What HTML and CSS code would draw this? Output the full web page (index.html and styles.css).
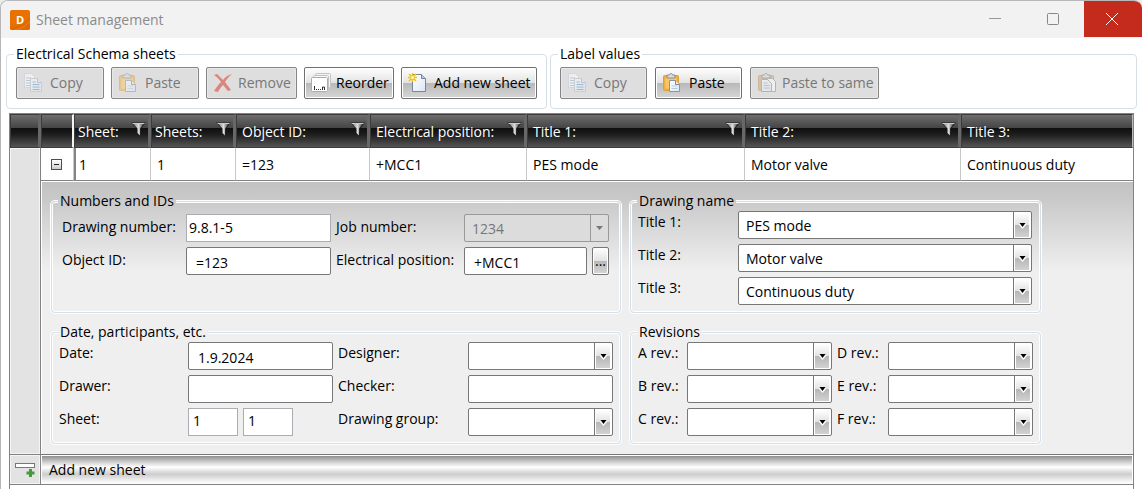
FILE: index.html
```html
<!DOCTYPE html>
<html lang="en">
<head>
<meta charset="utf-8">
<title>Sheet management</title>
<link rel="stylesheet" href="styles.css">
</head>
<body>
<svg width="0" height="0" class="defs" aria-hidden="true">
  <defs>
    <linearGradient id="funnelFill" x1="0" x2="1" y1="0" y2="0">
      <stop offset="0" stop-color="#777"/><stop offset=".5" stop-color="#ddd"/><stop offset="1" stop-color="#333"/>
    </linearGradient>
    <linearGradient id="pageFill" x1="0" x2="1" y1="0" y2="1">
      <stop offset="0" stop-color="#fff"/><stop offset="1" stop-color="#dbe6f4"/>
    </linearGradient>
    <symbol id="copy" viewBox="0 0 20 20">
      <path d="M1.500 .5h7l3 3v11h-10z" fill="#fff" stroke="#c8d0da"/>
      <path d="M3 5h5M3 7.500h6M3 10h6M3 12.500h4" stroke="#8fb4dc"/>
      <path d="M7.500 5.500h7l4 4v9h-11z" fill="url(#pageFill)" stroke="#b4bfcc"/>
      <path d="M14.500 5.500v4h4" fill="#e8eef6" stroke="#9aa9bb"/>
      <path d="M9.500 9h3M9.500 11.500h7M9.500 14h7M9.500 16.500h7" stroke="#5e96cf"/>
    </symbol>
    <symbol id="paste" viewBox="0 0 20 20">
      <rect x="1.500" y="2.500" width="15" height="15" rx="1" fill="#f0b040" stroke="#dba03a"/>
      <path d="M3.500 5h11v10.500h-11z" fill="#f8c766"/>
      <path d="M5 2h2.500c0-2 3-2 3 0H13v3H5z" fill="#d9dde2" stroke="#868c94"/>
      <path d="M7.500 7.500h6l4 4v7h-10z" fill="url(#pageFill)" stroke="#8995a4"/>
      <path d="M13.500 7.500v4h4" fill="#eef3f9" stroke="#7a8797"/>
      <path d="M9.500 13h5.500M9.500 15.500h6" stroke="#b9cbe0"/>
    </symbol>
    <symbol id="pasteSame" viewBox="0 0 20 20">
      <rect x="1.500" y="2.500" width="15" height="15" rx="1" fill="#d9a66a" stroke="#b98d5c"/>
      <path d="M5 2h2.500c0-2 3-2 3 0H13v3H5z" fill="#d9dde2" stroke="#70767e"/>
      <path d="M10.500 5.500h5l3 3v10h-8z" fill="#fff" stroke="#8b8b8b"/>
      <path d="M4.500 6.500h6l4 4v8h-10z" fill="url(#pageFill)" stroke="#8b8b8b"/>
      <path d="M6.500 10h4M6.500 12.500h6M6.500 15h6" stroke="#7fa9d8"/>
    </symbol>
    <symbol id="remove" viewBox="0 0 20 20">
      <path d="M1 2l3-1c2 2 4 4 6 6 2-3 5-5 9-6-3 2-5 5-7 8 2 3 4 5 6 8l-3 1c-2-2-3-4-5-6-2 2-4 5-5 7l-4-1c2-3 4-6 7-9-2-3-4-5-7-7z" fill="#d8301c"/>
    </symbol>
    <symbol id="reorder" viewBox="0 0 20 20">
      <rect x="4.500" y=".5" width="15" height="14" rx="1" fill="#f4f4f4" stroke="#c4c4c4"/>
      <rect x="2.500" y="2.500" width="15" height="14" rx="1" fill="#fafafa" stroke="#c0c0c0"/>
      <rect x=".5" y="4.500" width="16" height="14" rx="1" fill="#fff" stroke="#adadad"/>
      <path d="M3.500 13v4M11.500 17v-3h2v3M5 16.500h1M7 16.500h1M9 16.500h1" fill="none" stroke="#333"/>
    </symbol>
    <symbol id="new" viewBox="0 0 20 20">
      <path d="M4.500 1.500h9l4 4v13h-13z" fill="url(#pageFill)" stroke="#75879f"/>
      <path d="M13.500 1.500v4h4" fill="#bccbe0" stroke="#75879f"/>
      <path d="M4.500 0v9M0 4.500h9M1 1l7 7M8 1l-7 7" stroke="#f1c40f" stroke-width="1.500"/>
      <circle cx="4.500" cy="4.500" r="1.500" fill="#fff7c2"/>
    </symbol>
    <symbol id="funnel" viewBox="0 0 15 16">
      <path d="M0 .5h15l-5 6.500v8.500l-4-4V7z" fill="#222"/>
      <path d="M2 1.500h11L9 6.500v7l-2.500-2.500V6.500z" fill="url(#funnelFill)"/>
      <path d="M1.500 1.500h12" stroke="#ccc"/>
    </symbol>
  </defs>
</svg>
<div class="window">
  <header class="titlebar">
    <svg class="logo" viewBox="0 0 20 20" aria-hidden="true">
      <rect width="20" height="20" rx="2" fill="#e87200"/>
      <path d="M0 17c7 0 14-3 20-10v11a2 2 0 0 1-2 2H2a2 2 0 0 1-2-2z" fill="#e06900"/>
      <path d="M5 20c6-1 11-4 15-9" fill="none" stroke="#ee8420"/>
      <text x="10" y="14" text-anchor="middle" class="logo-letter">D</text>
    </svg>
    <h1 class="title">Sheet management</h1>
    <button class="caption" aria-label="Minimize"><svg viewBox="0 0 12 12"><path d="M0 5.500h12" stroke="#999"/></svg></button>
    <button class="caption" aria-label="Maximize"><svg viewBox="0 0 12 12"><rect x=".5" y=".5" width="11" height="11" rx="1" fill="none" stroke="#888"/></svg></button>
    <button class="caption close" aria-label="Close"><svg viewBox="0 0 12 12"><path d="M0 0l12 12M12 0L0 12" stroke="#fff"/></svg></button>
  </header>

  <div class="toolbar">
    <fieldset class="group tools">
      <legend>Electrical Schema sheets</legend>
      <div class="buttons">
        <button class="btn" disabled><svg><use href="#copy"/></svg>Copy</button>
        <button class="btn" disabled><svg><use href="#paste"/></svg>Paste</button>
        <button class="btn remove" disabled><svg><use href="#remove"/></svg>Remove</button>
        <button class="btn reorder"><svg><use href="#reorder"/></svg>Reorder</button>
        <button class="btn add"><svg><use href="#new"/></svg>Add new sheet</button>
      </div>
    </fieldset>
    <fieldset class="group tools labels">
      <legend>Label values</legend>
      <div class="buttons">
        <button class="btn" disabled><svg><use href="#copy"/></svg>Copy</button>
        <button class="btn"><svg><use href="#paste"/></svg>Paste</button>
        <button class="btn same" disabled><svg><use href="#pasteSame"/></svg>Paste to same</button>
      </div>
    </fieldset>
  </div>

  <main class="sheet-area">
    <table class="sheets">
      <colgroup>
        <col class="c-handle"><col class="c-expand"><col class="c-sheet"><col class="c-sheets"><col class="c-object"><col class="c-position"><col class="c-title1"><col class="c-title2"><col>
      </colgroup>
      <thead>
        <tr>
          <td></td>
          <td class="frozen"></td>
          <th scope="col"><div class="head">Sheet:<svg><use href="#funnel"/></svg></div></th>
          <th scope="col"><div class="head">Sheets:<svg><use href="#funnel"/></svg></div></th>
          <th scope="col"><div class="head">Object ID:<svg><use href="#funnel"/></svg></div></th>
          <th scope="col"><div class="head">Electrical position:<svg><use href="#funnel"/></svg></div></th>
          <th scope="col"><div class="head">Title 1:<svg><use href="#funnel"/></svg></div></th>
          <th scope="col"><div class="head">Title 2:<svg><use href="#funnel"/></svg></div></th>
          <th scope="col"><div class="head">Title 3:</div></th>
        </tr>
      </thead>
      <tbody>
        <tr class="record">
          <td class="handle" rowspan="2"></td>
          <td class="expand"><button class="toggle" aria-label="Collapse row"></button></td>
          <td class="first">1</td><td>1</td><td>=123</td><td>+MCC1</td><td>PES mode</td><td>Motor valve</td><td>Continuous duty</td>
        </tr>
        <tr>
          <td class="detail" colspan="8">
            <div class="panels">
              <fieldset class="group panel upper">
                <legend>Numbers and IDs</legend>
                <div class="form numbers">
                  <label for="drawing-number">Drawing number:</label>
                  <input id="drawing-number" class="field plain" value="9.8.1-5">
                  <label for="job-number">Job number:</label>
                  <select id="job-number" class="field" disabled><option>1234</option></select>
                  <label for="object-id">Object ID:</label>
                  <input id="object-id" class="field" value="=123">
                  <label for="position">Electrical position:</label>
                  <div class="browse"><input id="position" class="field" value="+MCC1"><button class="more" aria-label="Browse">...</button></div>
                </div>
              </fieldset>
              <fieldset class="group panel upper">
                <legend>Drawing name</legend>
                <div class="form names">
                  <label for="t1">Title 1:</label><select id="t1" class="field"><option>PES mode</option></select>
                  <label for="t2">Title 2:</label><select id="t2" class="field"><option>Motor valve</option></select>
                  <label for="t3">Title 3:</label><select id="t3" class="field"><option>Continuous duty</option></select>
                </div>
              </fieldset>
              <fieldset class="group panel">
                <legend>Date, participants, etc.</legend>
                <div class="form people">
                  <label for="date">Date:</label><input id="date" class="field" value="1.9.2024">
                  <label for="designer">Designer:</label><select id="designer" class="field"><option></option></select>
                  <label for="drawer">Drawer:</label><input id="drawer" class="field">
                  <label for="checker">Checker:</label><input id="checker" class="field">
                  <label for="sheet">Sheet:</label>
                  <div class="pair"><input id="sheet" class="field plain raised" value="1"><input class="field plain raised" aria-label="Sheets" value="1"></div>
                  <label for="drawing-group">Drawing group:</label><select id="drawing-group" class="field"><option></option></select>
                </div>
              </fieldset>
              <fieldset class="group panel">
                <legend>Revisions</legend>
                <div class="form revisions">
                  <label for="ra">A rev.:</label><select id="ra" class="field"><option></option></select>
                  <label for="rd">D rev.:</label><select id="rd" class="field"><option></option></select>
                  <label for="rb">B rev.:</label><select id="rb" class="field"><option></option></select>
                  <label for="re">E rev.:</label><select id="re" class="field"><option></option></select>
                  <label for="rc">C rev.:</label><select id="rc" class="field"><option></option></select>
                  <label for="rf">F rev.:</label><select id="rf" class="field"><option></option></select>
                </div>
              </fieldset>
            </div>
          </td>
        </tr>
        <tr class="new-row">
          <td class="handle">
            <svg class="insert" viewBox="0 0 22 16" aria-hidden="true">
              <rect x="1.500" y="1.500" width="19" height="4" fill="#fff" stroke="#777"/>
              <path d="M12.500 11h8M16.500 7v8" stroke="#449b3c" stroke-width="3"/>
            </svg>
          </td>
          <td colspan="8"><button class="add-row">Add new sheet</button></td>
        </tr>
      </tbody>
    </table>
  </main>
</div>
</body>
</html>
```

FILE: styles.css
```css
* { box-sizing: border-box; }

body {
  margin: 0;
  background: #ececec;
  color: #000;
  font: 14px/20px "Open Sans", "Noto Sans", sans-serif;
}

button, input, select { margin: 0; font: inherit; color: inherit; }

.defs { position: absolute; }

.window {
  display: flex;
  flex-direction: column;
  min-height: 100vh;
  overflow: hidden;
  background: #fff;
  border: 1px solid #b7b7b7;
  border-right: 0;
  border-bottom: 0;
  border-radius: 8px 8px 0 0;
}

/* Title bar */
.titlebar {
  display: flex;
  align-items: center;
  height: 37px;
  padding-left: 9px;
  background: #f2f2f2;
}
.logo { width: 20px; height: 20px; }
.logo-letter { font: bold 11px "Open Sans", sans-serif; fill: #fff; }
.title {
  flex: 1;
  margin: 0 0 0 6px;
  color: #8b8b8b;
  font-size: 14px;
  font-weight: 400;
}
.caption {
  display: grid;
  place-items: center;
  width: 58px;
  height: 36px;
  padding: 0 4px 0 0;
  align-self: start;
  border: 0;
  background: none;
}
.caption svg { width: 12px; height: 12px; }
.close { padding: 0 2px 0 0; background: #c42b1c; }

/* Group boxes */
.group {
  min-width: 0;
  margin: 0;
  padding: 0;
  border: 1px solid #d5dfe5;
  border-radius: 4px;
}
.group legend { margin-left: 7px; padding: 0 2px; line-height: 20px; }

.toolbar { display: flex; gap: 3px; padding: 6px 5px 0; }
.tools { height: 65px; }
.tools.labels { flex: 1; }
.buttons { display: flex; gap: 7px; padding: 3px 9px 8px; }
.labels .buttons { gap: 8px; }

.btn {
  display: flex;
  align-items: center;
  gap: 7px;
  width: 88px;
  height: 32px;
  padding: 0 0 0 6px;
  border: 1px solid #707070;
  border-radius: 2px;
  background: linear-gradient(#fff, #e2e2e2 50%, #b8b8b8 50%, #d6d6d6);
  box-shadow: inset 0 0 0 1px #fff;
  white-space: nowrap;
}
.btn svg { flex: none; width: 20px; height: 20px; }
.btn:disabled {
  border-color: #858585;
  background: #dedede;
  box-shadow: inset 0 0 0 1px #e8e8e8;
  color: #777;
}
.btn:disabled svg { opacity: .5; }
.labels .btn { width: 87px; }
.btn.remove { width: 91px; gap: 5px; }
.btn.reorder { width: 90px; gap: 5px; }
.btn.add { width: 136px; gap: 6px; }
.labels .btn.same { width: 129px; gap: 5px; }

/* Data grid */
.sheet-area {
  flex: 1;
  margin: 4px 8px 0;
  border: solid #828282;
  border-width: 1px 1px 0;
}
.sheets {
  width: 100%;
  border-spacing: 0;
  table-layout: fixed;
}
.sheets td, .sheets th { padding: 0; text-align: left; font-weight: 400; }
.c-handle { width: 31px; }
.c-expand { width: 33px; }
.c-sheet { width: 77px; }
.c-sheets { width: 85px; }
.c-object { width: 134px; }
.c-position { width: 157px; }
.c-title1 { width: 218px; }
.c-title2 { width: 216px; }

.sheets thead td, .sheets thead th {
  height: 34px;
  border: 1px solid #3c3c3c;
  border-right: 3px solid #686868;
  background: linear-gradient(#6d6d6d, #454545 40%, #101010 42%, #1c1c1c 60%, #555);
  color: #fff;
}
.sheets thead .frozen { border-right: 2px solid #f4f4f4; }
.sheets thead th:last-child { border-right: 1px solid #bbb; }
.head { display: flex; align-items: center; justify-content: space-between; padding: 2px 2px 0 5px; white-space: nowrap; }
.head svg { width: 15px; height: 16px; flex: none; margin-top: -4px; }
.sheets th:nth-child(-n + 4) .head { padding-left: 3px; }

.record td {
  height: 33px;
  padding: 1px 6px 0;
  border-right: 1px solid #c8c8c8;
  border-bottom: 1px solid #828282;
}
.record td:last-child { border-right: 0; }
.record .first { padding-left: 3px; border-left: 2px solid #858585; }
.record .expand { padding: 0 10px; text-align: center; }
.sheets .handle {
  height: auto;
  padding: 0;
  background: #e3e3e3;
  border: 0 solid #828282;
  border-width: 0 1px 1px 0;
  box-shadow: inset 0 0 0 1px #f4f4f4;
}
.toggle {
  display: block;
  width: 11px;
  height: 11px;
  padding: 0;
  border: 1px solid #4d4d4d;
  background: linear-gradient(#222, #222) center / 5px 1px no-repeat, linear-gradient(#fff, #ccc);
}

.sheets .detail {
  padding: 10px 10px 10px;
  border-bottom: 1px solid #777;
  background: linear-gradient(#c1c1c1, #cacaca 20px, #efefef 90px);
  box-shadow: inset 1px 1px #fff;
}
.panels {
  display: grid;
  grid-template-columns: 570px 411px;
  gap: 9px;
}
.panel { height: 122px; border-color: #d5dfe9; box-shadow: 0 0 0 1px #fff, inset 0 0 0 1px #fff; }
.panel legend {
  margin-left: 6px;
  background: linear-gradient(#efefef, #efefef) center / 100% 3px no-repeat;
}
.upper legend { background-image: linear-gradient(#cbcbcb, #cdcdcd); }

/* Forms */
.form { display: grid; grid-auto-rows: 28px; row-gap: 5px; padding: 0 8px 8px 7px; }
.form label { padding-top: 1px; white-space: nowrap; }
.numbers { grid-template-columns: 124px 145px 133px 145px; padding-top: 3px; padding-left: 10px; }
.people { grid-template-columns: 129px 145px 135px 145px; }
.names { grid-template-columns: 100px 1fr; }
.revisions { grid-template-columns: 49px 145px 56px 145px; }
.numbers label { padding-top: 3px; }
.form > label:nth-child(4n + 3) { padding-left: 5px; }
.names > label:nth-child(n) { padding-left: 0; }

.field {
  width: 100%;
  min-width: 0;
  height: 28px;
  padding: 2px 9px 0;
  border: 1px solid #777;
  border-radius: 2px;
  outline: 0;
  background: #fff;
}
.plain { padding: 0 2px 2px; border-color: #abadb3; border-radius: 0; }
.raised { padding: 0 4px 4px; }

select.field {
  appearance: none;
  padding: 2px 20px 0 7px;
  background:
    url("data:image/svg+xml,%3Csvg xmlns='http://www.w3.org/2000/svg' width='7' height='6'%3E%3Cpath d='M0 1h7v1L3.500 6 0 2z' fill='white'/%3E%3Cpath d='M.5 0h6L3.500 4z' fill='black'/%3E%3C/svg%3E") right 5px top 11px / 7px 6px no-repeat,
    linear-gradient(#fff, #e2e2e2 50%, #b5b5b5 50%, #d2d2d2) right 2px center / 14px 24px no-repeat,
    linear-gradient(#777, #777) right 17px top / 1px 100% no-repeat,
    #fff;
}
select.field:disabled {
  border-color: #999;
  opacity: 1;
  color: #777;
  background:
    url("data:image/svg+xml,%3Csvg xmlns='http://www.w3.org/2000/svg' width='7' height='4'%3E%3Cpath d='M0 0h7L3.500 4z' fill='%23777'/%3E%3C/svg%3E") right 5px top 11px / 7px 4px no-repeat,
    linear-gradient(#999, #999) right 17px top / 1px 100% no-repeat,
    #dcdcdc;
}
.pair { display: grid; grid-template-columns: 50px 50px; gap: 5px; }
.browse { display: grid; grid-template-columns: 1fr 17px; gap: 5px; }
.more {
  padding: 0;
  border: 1px solid #777;
  border-radius: 2px;
  background: linear-gradient(#fff, #e2e2e2 50%, #b8b8b8 50%, #d6d6d6);
  box-shadow: inset 0 0 0 1px #fff;
}

.sheets .new-row td { height: 30px; border-bottom: 1px solid #828282; }
.insert { display: block; width: 22px; height: 16px; margin: 0 auto; }
.add-row {
  display: block;
  width: 100%;
  height: 29px;
  padding: 0 7px;
  border: 1px solid #fff;
  border-bottom: 0;
  background: linear-gradient(#8f8f8f, #d8d8d8 25%, #fff 40%, #e0e0e0 55%, #cdcdcd 65%, #f4f4f4 90%, #fff);
  text-align: left;
}
```
